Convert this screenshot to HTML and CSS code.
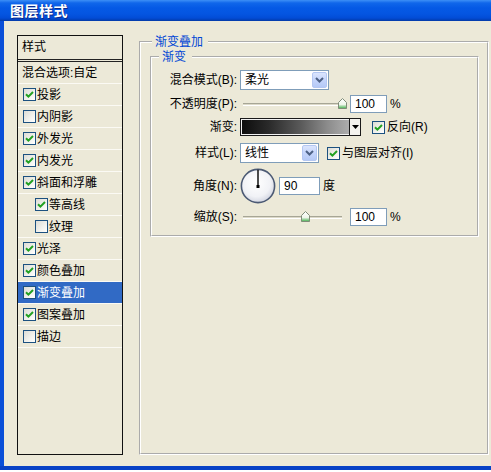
FILE: index.html
```html
<!DOCTYPE html>
<html lang="zh">
<head>
<meta charset="utf-8">
<title>图层样式</title>
<link rel="stylesheet" href="styles.css">
</head>
<body>
<div class="window">
  <div class="titlebar"><span class="title">图层样式</span></div>
  <div class="main">
    <div class="styles-list">
      <div class="list-head">样式</div>
      <div class="list-row plain">混合选项:自定</div>
      <div class="list-row"><span class="cb on"><svg viewBox="0 0 11 11" width="11" height="11"><path d="M2 5.2 L4.4 7.6 L9 3" fill="none" stroke="#21a121" stroke-width="2"/></svg></span>投影</div>
      <div class="list-row"><span class="cb"></span>内阴影</div>
      <div class="list-row"><span class="cb on"><svg viewBox="0 0 11 11" width="11" height="11"><path d="M2 5.2 L4.4 7.6 L9 3" fill="none" stroke="#21a121" stroke-width="2"/></svg></span>外发光</div>
      <div class="list-row"><span class="cb on"><svg viewBox="0 0 11 11" width="11" height="11"><path d="M2 5.2 L4.4 7.6 L9 3" fill="none" stroke="#21a121" stroke-width="2"/></svg></span>内发光</div>
      <div class="list-row"><span class="cb on"><svg viewBox="0 0 11 11" width="11" height="11"><path d="M2 5.2 L4.4 7.6 L9 3" fill="none" stroke="#21a121" stroke-width="2"/></svg></span>斜面和浮雕</div>
      <div class="list-row sub"><span class="cb on"><svg viewBox="0 0 11 11" width="11" height="11"><path d="M2 5.2 L4.4 7.6 L9 3" fill="none" stroke="#21a121" stroke-width="2"/></svg></span>等高线</div>
      <div class="list-row sub"><span class="cb"></span>纹理</div>
      <div class="list-row"><span class="cb on"><svg viewBox="0 0 11 11" width="11" height="11"><path d="M2 5.2 L4.4 7.6 L9 3" fill="none" stroke="#21a121" stroke-width="2"/></svg></span>光泽</div>
      <div class="list-row"><span class="cb on"><svg viewBox="0 0 11 11" width="11" height="11"><path d="M2 5.2 L4.4 7.6 L9 3" fill="none" stroke="#21a121" stroke-width="2"/></svg></span>颜色叠加</div>
      <div class="list-row sel"><span class="cb on"><svg viewBox="0 0 11 11" width="11" height="11"><path d="M2 5.2 L4.4 7.6 L9 3" fill="none" stroke="#21a121" stroke-width="2"/></svg></span>渐变叠加</div>
      <div class="list-row"><span class="cb on"><svg viewBox="0 0 11 11" width="11" height="11"><path d="M2 5.2 L4.4 7.6 L9 3" fill="none" stroke="#21a121" stroke-width="2"/></svg></span>图案叠加</div>
      <div class="list-row"><span class="cb"></span>描边</div>
    </div>

    <fieldset class="group outer">
      <legend class="legend-outer">渐变叠加</legend>
      <fieldset class="group inner">
        <legend class="legend-inner">渐变</legend>
        <div class="form">
          <span class="lbl">混合模式(B):</span>
          <div class="ctl">
            <div class="select sel-wide"><span class="sel-text">柔光</span><span class="sel-btn"><svg viewBox="0 0 9 6" width="9" height="6"><path d="M1 1 L4.5 4.5 L8 1" fill="none" stroke="#4d6185" stroke-width="2"/></svg></span></div>
          </div>

          <span class="lbl">不透明度(P):</span>
          <div class="ctl">
            <div class="slider"><span class="track"></span><span class="thumb" style="left:98px"><svg viewBox="0 0 9 11" width="9" height="11"><defs><linearGradient id="tg1" x1="0" y1="0" x2="0" y2="1"><stop offset="0" stop-color="#ffffff"/><stop offset="0.6" stop-color="#eef5ea"/><stop offset="1" stop-color="#3fae4a"/></linearGradient></defs><path d="M0.5 4.5 L4.5 0.5 L8.5 4.5 L8.5 10.5 L0.5 10.5 Z" fill="url(#tg1)" stroke="#7f8c78"/></svg></span></div>
            <span class="num num-short">100</span>
            <span class="unit">%</span>
          </div>

          <span class="lbl">渐变:</span>
          <div class="ctl">
            <div class="gradient"><span class="grad-fill"></span><span class="grad-arrow"><svg viewBox="0 0 7 4" width="7" height="4"><path d="M0 0 L7 0 L3.5 4 Z" fill="#000"/></svg></span></div>
            <span class="chk chk-rev"><span class="cb on"><svg viewBox="0 0 11 11" width="11" height="11"><path d="M2 5.2 L4.4 7.6 L9 3" fill="none" stroke="#21a121" stroke-width="2"/></svg></span>反向(R)</span>
          </div>

          <span class="lbl">样式(L):</span>
          <div class="ctl">
            <div class="select sel-narrow"><span class="sel-text">线性</span><span class="sel-btn"><svg viewBox="0 0 9 6" width="9" height="6"><path d="M1 1 L4.5 4.5 L8 1" fill="none" stroke="#4d6185" stroke-width="2"/></svg></span></div>
            <span class="chk chk-align"><span class="cb on"><svg viewBox="0 0 11 11" width="11" height="11"><path d="M2 5.2 L4.4 7.6 L9 3" fill="none" stroke="#21a121" stroke-width="2"/></svg></span>与图层对齐(I)</span>
          </div>

          <span class="lbl">角度(N):</span>
          <div class="ctl">
            <svg class="dial" viewBox="0 0 36 36" width="36" height="36"><defs><radialGradient id="dg" cx="0.45" cy="0.4" r="0.6"><stop offset="0" stop-color="#ffffff"/><stop offset="0.7" stop-color="#f1f2f6"/><stop offset="1" stop-color="#d4d7e2"/></radialGradient></defs><circle cx="18" cy="18" r="16.6" fill="url(#dg)" stroke="#4c5a74" stroke-width="1.6"/><line x1="18" y1="18.5" x2="18" y2="1.8" stroke="#000" stroke-width="1.4"/><rect x="16.5" y="17" width="3" height="3" fill="#000"/></svg>
            <span class="num num-angle">90</span>
            <span class="unit">度</span>
          </div>

          <span class="lbl">缩放(S):</span>
          <div class="ctl">
            <div class="slider"><span class="track"></span><span class="thumb" style="left:61px"><svg viewBox="0 0 9 11" width="9" height="11"><defs><linearGradient id="tg2" x1="0" y1="0" x2="0" y2="1"><stop offset="0" stop-color="#ffffff"/><stop offset="0.6" stop-color="#eef5ea"/><stop offset="1" stop-color="#3fae4a"/></linearGradient></defs><path d="M0.5 4.5 L4.5 0.5 L8.5 4.5 L8.5 10.5 L0.5 10.5 Z" fill="url(#tg2)" stroke="#7f8c78"/></svg></span></div>
            <span class="num num-short">100</span>
            <span class="unit">%</span>
          </div>
        </div>
      </fieldset>
    </fieldset>
  </div>
</div>
</body>
</html>
```

FILE: styles.css
```css
* { box-sizing: border-box; }

body {
  margin: 0;
  background: #ffffff;
  font-family: "Liberation Sans", "Noto Sans CJK SC", sans-serif;
  font-size: 12px;
  line-height: 14px;
  color: #000;
}

.window {
  width: 491px;
  height: 470px;
  display: flex;
  flex-direction: column;
  border-bottom: 4px solid #0842c6;
}

.titlebar {
  height: 21px;
  flex: none;
  display: flex;
  align-items: center;
  padding-left: 10px;
  background: linear-gradient(to bottom, #3d8ff6 0, #1066ea 3px, #0559e5 8px, #0455e1 14px, #024cd6 18px, #0240b8 20px, #033aa6 21px);
}

.title {
  color: #fff;
  font-weight: bold;
  font-size: 14px;
  line-height: 16px;
  text-shadow: 1px 1px 0 #0b2a8a;
  letter-spacing: 0.5px;
}

.main {
  flex: 1;
  display: flex;
  gap: 16px;
  background: #ece9d8;
  border-left: 4px solid #0a4fd8;
  padding: 14px 2px 11px 13px;
}

/* left styles list */
.styles-list {
  width: 106px;
  flex: none;
  border: 1px solid #111;
  background: #ece9d8;
}

.list-head {
  height: 26px;
  line-height: 23px;
  padding-left: 4px;
  border-bottom: 3px double #222;
}

.list-row {
  height: 22px;
  display: flex;
  align-items: center;
  gap: 1px;
  padding-left: 5px;
  border-bottom: 1px solid #fbfaf4;
  white-space: nowrap;
}

.list-row.plain { padding-left: 4px; }
.list-row.sub { padding-left: 17px; }
.list-row.sel { background: #316ac5; color: #fff; }

/* checkbox */
.cb {
  width: 13px;
  height: 13px;
  flex: none;
  border: 1px solid #1c5180;
  background: linear-gradient(135deg, #dcdcd5 0%, #f2f2ee 60%, #ffffff 100%);
  display: inline-flex;
}

.cb svg { display: block; }

/* group boxes */
.group {
  margin: 0;
  min-width: 0;
  border: 2px groove #ffffff;
}

.outer {
  flex: 1;
  padding: 1px 8px 0 9px;
}

.inner {
  padding: 4px 6px 5px 7px;
}

.legend-outer {
  color: #0046d5;
  padding: 0 5px 0 3px;
  margin-left: 2px;
  line-height: 14px;
}

.legend-inner {
  color: #0046d5;
  padding: 0 6px 0 3px;
  line-height: 14px;
}

/* form grid */
.form {
  display: grid;
  grid-template-columns: 78px 1fr;
  grid-template-rows: 24px 24px 22px 30px 36px 26px;
  column-gap: 3px;
  align-items: center;
}

.lbl {
  text-align: right;
  white-space: nowrap;
}

.ctl {
  display: flex;
  align-items: center;
}

/* combobox */
.select {
  height: 20px;
  border: 1px solid #7f9db9;
  background: #fff;
  display: flex;
  align-items: stretch;
}

.sel-wide { width: 89px; }
.sel-narrow { width: 79px; margin-right: 8px; }

.sel-text {
  flex: 1;
  padding-left: 4px;
  line-height: 18px;
}

.sel-btn {
  width: 15px;
  margin: 1px;
  border: 1px solid #b4c7f2;
  border-radius: 2px;
  background: linear-gradient(to bottom, #dbe5fd 0%, #c5d5fb 50%, #b5c9f6 100%);
  display: flex;
  align-items: center;
  justify-content: center;
}

/* slider */
.slider {
  position: relative;
  width: 107px;
  height: 12px;
  margin-right: 3px;
  display: flex;
  align-items: center;
  padding-left: 3px;
}

.track {
  width: 99px;
  height: 3px;
  border-top: 1px solid #a7a696;
  border-bottom: 1px solid #ffffff;
  background: #dcd9c8;
}

.thumb {
  position: absolute;
  top: 0;
  width: 9px;
  height: 11px;
}

.thumb svg { display: block; }

/* number fields */
.num {
  height: 18px;
  border: 1px solid #7f9db9;
  background: #fff;
  line-height: 16px;
  padding-left: 4px;
  margin-right: 3px;
}

.num-short { width: 37px; }
.num-angle { width: 41px; }

.dial {
  display: block;
  margin-right: 3px;
}

/* gradient picker */
.gradient {
  width: 121px;
  height: 18px;
  border: 1px solid #1a1a1a;
  display: flex;
  margin-right: 11px;
  background: #fff;
}

.grad-fill {
  flex: 1;
  border: 1px solid #f2f2f2;
  border-right: none;
  background: linear-gradient(to right, #0d0d0d 0%, #2a2a2a 25%, #5a5a5a 55%, #8c8c8c 80%, #adadad 100%);
}

.grad-arrow {
  width: 11px;
  border-left: 1px solid #1a1a1a;
  background: #f4f3ee;
  display: flex;
  align-items: center;
  justify-content: center;
}

.grad-arrow svg { display: block; }

.chk {
  display: flex;
  align-items: center;
  gap: 2px;
  white-space: nowrap;
}

.unit { white-space: nowrap; }
```
